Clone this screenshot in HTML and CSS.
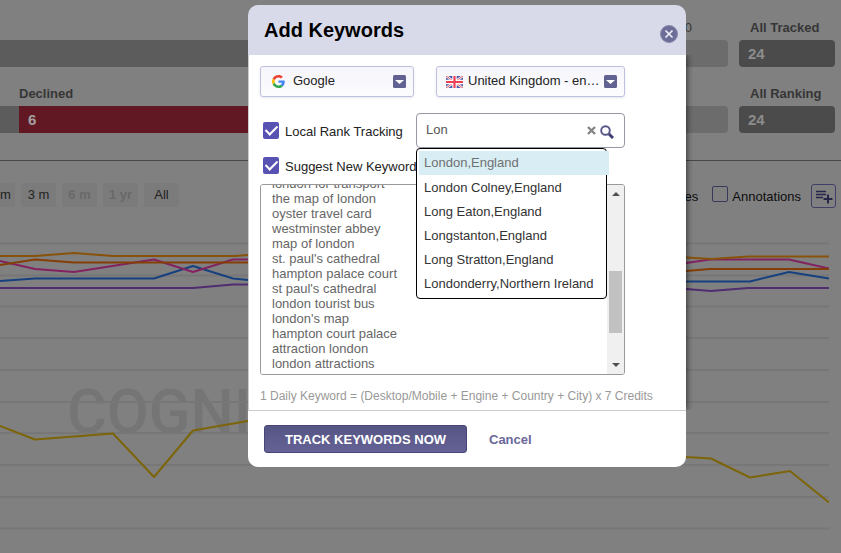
FILE: index.html
```html
<!DOCTYPE html>
<html lang="en">
<head>
<meta charset="utf-8">
<title>Add Keywords</title>
<link rel="stylesheet" href="styles.css">
</head>
<body>
<main class="page">
  <section class="stats">
    <div class="stat-row">
      <div class="stat grow"><span class="stat-label"></span><div class="bar dark"></div></div>
      <div class="stat side"><span class="stat-label thin">0</span><div class="bar light"></div></div>
      <div class="stat total"><span class="stat-label">All Tracked</span><div class="bar deep">24</div></div>
    </div>
    <div class="stat-row">
      <div class="stat stub"><span class="stat-label"></span><div class="bar dark"></div></div>
      <div class="stat grow"><span class="stat-label">Declined</span><div class="bar red">6</div></div>
      <div class="stat side"><span class="stat-label"></span><div class="bar light"></div></div>
      <div class="stat total"><span class="stat-label">All Ranking</span><div class="bar deep">24</div></div>
    </div>
  </section>

  <section class="toolbar">
    <div class="ranges">
      <button type="button" class="range first">m</button>
      <button type="button" class="range">3 m</button>
      <button type="button" class="range" disabled>6 m</button>
      <button type="button" class="range" disabled>1 yr</button>
      <button type="button" class="range">All</button>
    </div>
    <div class="options">
      <span>es</span>
      <span class="note"><input type="checkbox" id="annotations" class="box"><label for="annotations">Annotations</label></span>
      <button type="button" class="add-note" aria-label="Add annotation">
        <svg width="18" height="16" viewBox="0 0 18 16" fill="none" stroke="#26264a"><path d="M1 3.500h10M1 6.500h10M1 9.500h7" stroke-width="1.300"/><path d="M13 6.500v9M8.500 11h9" stroke-width="2"/></svg>
      </button>
    </div>
  </section>

  <svg class="chart" viewBox="0 225 829 328" aria-hidden="true">
    <text class="watermark" x="67" y="433">COGNIT</text>
    <path class="grid" d="M0 243.500H829M0 275.500H829M0 306.500H829M0 338H829M0 370H829M0 402H829M0 433H829M0 465H829M0 497H829M0 528.500H829"/>
    <g class="series">
      <path stroke="#7c6508" d="M0 426L35 439.500L113 433.500L154 477L193 430.500L248 421L686 457L711 458.500L750 477.500L790 471L829 502.500"/>
      <path stroke="#4f2d70" d="M0 288H193L233 284.500H248L686 289L711 291L748 288H829"/>
      <path stroke="#17407f" d="M0 281L35 278.500H154L193 266L233 278.500L248 280L686 281.500H750L789 272L829 278.500"/>
      <path stroke="#822260" d="M0 261L35 269L74 272L154 259.500L193 272L233 259.500H248L686 263L710 259.500H789L829 268.500"/>
      <path stroke="#843e06" d="M0 265L35 259.500L74 262.500H248L686 271L710 269H829"/>
      <path stroke="#88520a" d="M0 256H35L74 253L113 256H235L248 255L686 257.500L712 259L748 256.500H829"/>
    </g>
  </svg>
</main>

<form class="dialog" role="dialog" aria-labelledby="dialog-title">
  <header class="dialog-head">
    <h1 id="dialog-title">Add Keywords</h1>
    <button type="button" class="close" aria-label="Close">
      <svg width="18" height="18" viewBox="0 0 18 18"><circle cx="9" cy="9" r="8.500" fill="#6d6d99" stroke="#8a8aab"/><path d="M5.500 5.500l7 7M12.500 5.500l-7 7" stroke="#eeeef6" stroke-width="1.700"/></svg>
    </button>
  </header>

  <div class="dialog-body">
    <div class="selects">
      <div class="select engine">
        <svg width="13" height="13" viewBox="0 0 48 48"><path fill="#ea4335" d="M24 9.500c3.540 0 6.710 1.220 9.210 3.600l6.850-6.850C35.900 2.380 30.470 0 24 0 14.620 0 6.510 5.380 2.560 13.220l7.980 6.190C12.430 13.720 17.740 9.500 24 9.500z"/><path fill="#4285f4" d="M46.980 24.550c0-1.570-.15-3.090-.38-4.550H24v9.020h12.940c-.58 2.960-2.260 5.480-4.780 7.180l7.730 6c4.510-4.180 7.090-10.360 7.090-17.650z"/><path fill="#fbbc05" d="M10.530 28.590c-.48-1.450-.76-2.990-.76-4.590s.27-3.140.76-4.590l-7.980-6.190C.92 16.460 0 20.120 0 24c0 3.880.92 7.540 2.560 10.780l7.970-6.190z"/><path fill="#34a853" d="M24 48c6.480 0 11.930-2.130 15.890-5.810l-7.730-6c-2.150 1.450-4.920 2.300-8.160 2.300-6.260 0-11.570-4.220-13.470-9.910l-7.980 6.190C6.510 42.620 14.620 48 24 48z"/></svg>
        <select aria-label="Search engine"><option>Google</option></select>
        <svg width="13" height="13" viewBox="0 0 13 13"><rect width="13" height="13" rx="1.500" fill="#626292"/><path d="M2 5h9L6.500 9z" fill="#fff"/></svg>
      </div>
      <div class="select country">
        <svg width="17" height="12" viewBox="0 0 17 12"><path fill="#4355a3" d="M0 0h17v12H0z"/><path d="M0 0l17 12M17 0L0 12" stroke="#f3eef5" stroke-width="2.600"/><path d="M0 0l17 12M17 0L0 12" stroke="#e0606c" stroke-width="1"/><path d="M8.500 0v12M0 6h17" stroke="#fff" stroke-width="4.400"/><path d="M8.500 0v12M0 6h17" stroke="#ee4055" stroke-width="2.200"/></svg>
        <select aria-label="Country"><option>United Kingdom - english</option></select>
        <svg width="13" height="13" viewBox="0 0 13 13"><rect width="13" height="13" rx="1.500" fill="#626292"/><path d="M2 5h9L6.500 9z" fill="#fff"/></svg>
      </div>
    </div>

    <div class="local">
      <div class="checks">
        <div class="check"><input type="checkbox" id="local" checked><label for="local">Local Rank Tracking</label></div>
        <div class="check"><input type="checkbox" id="suggest" checked><label for="suggest">Suggest New Keywords</label></div>
      </div>
      <div class="place">
        <div class="search">
          <input type="text" value="Lon" aria-label="Location">
          <button type="button" aria-label="Clear"><svg width="9" height="9" viewBox="0 0 9 9"><path d="M1 1l7 7M8 1L1 8" stroke="#858585" stroke-width="2.400"/></svg></button>
          <button type="button" aria-label="Search"><svg width="14" height="14" viewBox="0 0 14 14" fill="none" stroke="#55558a"><circle cx="5.500" cy="5.500" r="4.300" stroke-width="1.900"/><path d="M9 9l4 4" stroke="#3f3f78" stroke-width="3"/></svg></button>
        </div>
        <ul class="menu" role="listbox" aria-label="Locations">
          <li class="active" role="option" aria-selected="true">London,England</li>
          <li role="option">London Colney,England</li>
          <li role="option">Long Eaton,England</li>
          <li role="option">Longstanton,England</li>
          <li role="option">Long Stratton,England</li>
          <li role="option">Londonderry,Northern Ireland</li>
        </ul>
      </div>
    </div>

    <div class="keywords">
      <textarea id="keywords" aria-label="Keywords">london for transport
the map of london
oyster travel card
westminster abbey
map of london
st. paul's cathedral
hampton palace court
st paul's cathedral
london tourist bus
london's map
hampton court palace
attraction london
london attractions
map for london</textarea>
      <div class="scroll" aria-hidden="true">
        <span class="up"></span><span class="track"></span><span class="thumb"></span><span class="rest"></span><span class="down"></span>
      </div>
    </div>
    <p class="hint">1 Daily Keyword = (Desktop/Mobile + Engine + Country + City) x 7 Credits</p>
  </div>

  <footer class="dialog-foot">
    <button type="submit" class="primary">TRACK KEYWORDS NOW</button>
    <a href="#" class="cancel">Cancel</a>
  </footer>
</form>
<script src="script.js"></script>
</body>
</html>
```
FILE: styles.css
```css
* { box-sizing: border-box; }
body {
  margin: 0;
  background: #808080;
  font-family: "Liberation Sans", Arial, sans-serif;
  font-size: 13px;
  color: #0c0c0c;
}
button, input, select, textarea { font: inherit; color: inherit; margin: 0; }
button { padding: 0; border: 0; background: none; }
svg { display: block; flex: none; }

.page { height: 100vh; overflow: hidden; }

/* stat bars */
.stats {
  display: flex;
  flex-direction: column;
  gap: 16px;
  padding: 17px 6px 27px 0;
  border-bottom: 1px solid #484848;
}
.stat-row { display: flex; }
.stat { display: flex; flex-direction: column; gap: 3px; }
.stat-label { height: 20px; line-height: 22px; font-weight: bold; color: #363636; }
.stat-label.thin { font-weight: normal; text-align: right; padding-right: 36px; }
.grow { flex: 1; }
.stub { width: 19px; }
.side { width: 100px; }
.total { width: 96px; margin-left: 11px; }
.total .stat-label { padding-left: 11px; }
.bar {
  height: 27px;
  line-height: 27px;
  padding-left: 9px;
  font-size: 15px;
  font-weight: bold;
  color: #a3a0a1;
}
.dark { background: #5c5c5c; }
.light { background: #6c6c6c; border-radius: 0 4px 4px 0; }
.deep { background: #4b4b4b; border-radius: 4px; color: #8c8c8c; }
.red { background: #611823; }

/* toolbar */
.toolbar {
  display: flex;
  justify-content: space-between;
  align-items: flex-start;
  height: 64px;
  padding: 22px 5px 0 0;
}
.ranges { display: flex; gap: 6px; }
.range { width: 35px; height: 24px; background: #7b7b7b; border-radius: 2px; color: #222; padding-bottom: 2px; }
.range.first { width: 15px; padding-right: 7px; text-align: right; border-radius: 0 2px 2px 0; }
.range:disabled { color: #696969; font-weight: bold; }
.options { display: flex; align-items: center; gap: 10px; height: 26px; }
.note { display: flex; align-items: center; gap: 4px; margin-left: 4px; }
.box {
  appearance: none;
  width: 16px;
  height: 16px;
  margin-bottom: 4px;
  border: 1px solid #39395c;
  border-radius: 2px;
}
.add-note {
  display: grid;
  place-items: center;
  width: 25px;
  height: 24px;
  border: 1px solid #3f3f68;
  border-radius: 3px;
}

/* chart */
.chart { width: calc(100% - 12px); height: auto; }
.grid { stroke: #777; stroke-width: 2; }
.series { fill: none; stroke-width: 2; stroke-linejoin: round; }
.watermark { font: 500 61px Roboto, sans-serif; fill: #757575; }

/* dialog */
.dialog {
  position: absolute;
  top: 5px;
  left: 248px;
  width: 438px;
  border-radius: 10px;
}
.dialog-head {
  display: flex;
  justify-content: space-between;
  align-items: center;
  height: 50px;
  padding: 0 8px 0 16px;
  background: #d8daea;
  border-radius: 10px 10px 0 0;
}
h1 { margin: 0; font-size: 20px; line-height: 50px; color: #000; }
.close { margin-top: 8px; }
.dialog-body {
  padding: 11px 12px 5px 11px;
  background: #fff;
  border-left: 1px solid #ccc;
  box-shadow: 1px 0 6px rgba(0, 0, 0, .6);
  clip-path: inset(0 -8px 0 0);
}
.selects { display: flex; gap: 22px; }
.select {
  display: flex;
  align-items: center;
  height: 31px;
  padding: 0 7px 0 11px;
  background: linear-gradient(#f5f5fb, #fcfcfe);
  border: 1px solid #bfc2df;
  border-radius: 3px;
  box-shadow: 0 1px 2px rgba(90, 90, 150, .15);
}
.engine { width: 154px; }
.country { width: 189px; padding-left: 9px; }
.select select {
  appearance: none;
  flex: 1;
  min-width: 0;
  height: 27px;
  padding: 0 2px 2px 5px;
  border: 0;
  background: none;
  color: #222;
  text-overflow: ellipsis;
  overflow: hidden;
  white-space: nowrap;
}
.engine select { padding-left: 8px; }

.local { display: flex; margin-top: 16px; height: 71px; }
.checks { width: 156px; padding: 9px 0 0 3px; white-space: nowrap; }
.check { display: flex; align-items: center; gap: 6px; height: 17px; margin-bottom: 18px; }
.check label { color: #222; padding-top: 1px; }
.check input {
  appearance: none;
  display: grid;
  place-items: center;
  width: 16px;
  height: 17px;
  flex: none;
  background: #5853b2;
  border-radius: 2px;
}
.check input::before {
  content: "";
  width: 5px;
  height: 10px;
  margin-bottom: 3px;
  border: solid #fff;
  border-width: 0 2px 2px 0;
  transform: rotate(45deg);
}
.place { position: relative; width: 209px; }
.search {
  display: flex;
  align-items: center;
  gap: 4px;
  height: 35px;
  padding: 0 10px 0 9px;
  background: #fff;
  border: 1px solid #9698a6;
  border-radius: 4px;
}
.search input { flex: 1; min-width: 0; height: 29px; padding: 0 0 2px; border: 0; outline: 0; background: none; color: #555; }
.search button:last-child { padding-top: 2px; }
.menu {
  position: absolute;
  top: 35px;
  left: 0;
  z-index: 2;
  width: 191px;
  margin: 0;
  padding: 2px;
  list-style: none;
  background: #fff;
  border: 1px solid #000;
  border-radius: 4px;
}
.menu li { height: 24px; line-height: 24px; padding-left: 5px; color: #333; white-space: nowrap; }
.menu .active { width: 190px; margin-bottom: 1px; background: #d8edf4; color: #707070; }

.keywords {
  display: flex;
  width: 365px;
  height: 191px;
  border: 1px solid #999;
  border-radius: 3px;
  overflow: hidden;
}
.keywords textarea {
  flex: 1;
  padding: 0 11px;
  border: 0;
  outline: 0;
  resize: none;
  overflow: hidden;
  line-height: 15px;
  color: #666;
}
.scroll { display: flex; flex-direction: column; align-items: center; width: 17px; background: #f0f0f0; }
.up, .down { width: 0; border: 4px solid transparent; }
.up { margin-top: 3px; border-bottom-color: #505050; }
.down { margin-bottom: 3px; border-top-color: #505050; }
.track { flex: 75; }
.thumb { flex: 62; width: 13px; background: #c1c1c1; }
.rest { flex: 30; }
.hint { margin: 12px 0 0; font-size: 12px; line-height: 18px; color: #999; white-space: nowrap; }

.dialog-foot {
  display: flex;
  align-items: center;
  gap: 22px;
  height: 57px;
  padding: 0 16px;
  background: #fff;
  border-top: 1px solid #ccc;
  border-radius: 0 0 10px 10px;
}
.primary {
  width: 203px;
  height: 28px;
  background: linear-gradient(#555584, #656295);
  border: 1px solid #46467a;
  border-radius: 3px;
  font-weight: bold;
  color: #fff;
}
.cancel { font-weight: bold; color: #6a6799; text-decoration: none; }
```
FILE: script.js
```js
// Open the keyword list part-way through its first line.
document.getElementById("keywords").scrollTop = 9;
```
